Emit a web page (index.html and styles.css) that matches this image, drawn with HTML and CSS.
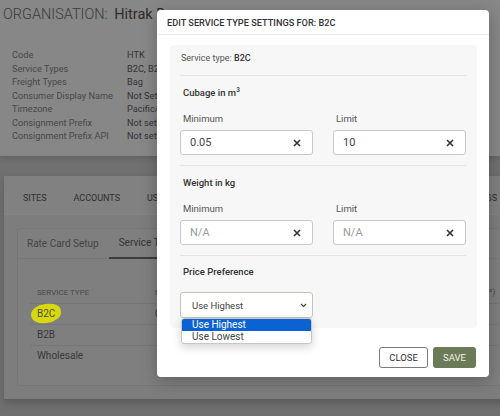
FILE: index.html
```html
<!DOCTYPE html>
<html lang="en">
<head>
    <meta charset="UTF-8">
    <meta name="viewport" content="width=device-width, initial-scale=1.0">
    <title>Organisation - Service Types</title>
    <link rel="stylesheet" href="styles.css">
</head>
<body>
    <div class="page">
        <header class="org-header">
            <h1 class="org-title"><span class="org-label">ORGANISATION:</span> Hitrak Demo</h1>
            <dl class="org-details">
                <div class="detail-row"><dt>Code</dt><dd>HTK</dd></div>
                <div class="detail-row"><dt>Service Types</dt><dd>B2C, B2B, Wholesale</dd></div>
                <div class="detail-row"><dt>Freight Types</dt><dd>Bag</dd></div>
                <div class="detail-row"><dt>Consumer Display Name</dt><dd>Not Set</dd></div>
                <div class="detail-row"><dt>Timezone</dt><dd>Pacific/Auckland</dd></div>
                <div class="detail-row"><dt>Consignment Prefix</dt><dd>Not set</dd></div>
                <div class="detail-row"><dt>Consignment Prefix API</dt><dd>Not set</dd></div>
            </dl>
        </header>

        <main class="content">
            <section class="card">
                <nav class="tabs">
                    <span class="tab">SITES</span>
                    <span class="tab">ACCOUNTS</span>
                    <span class="tab">USERS</span>
                    <span class="tab tab-last">SETTINGS</span>
                </nav>
                <div class="inner-card">
                    <nav class="subtabs">
                        <span class="subtab">Rate Card Setup</span>
                        <span class="subtab active">Service Types</span>
                    </nav>
                    <table class="service-table">
                        <thead>
                            <tr>
                                <th class="col-type">SERVICE TYPE</th>
                                <th class="col-min">MIN CUBAGE (m³)</th>
                                <th class="col-mid">MIN WEIGHT (kg)</th>
                                <th class="col-max">LIMIT (m³)</th>
                            </tr>
                        </thead>
                        <tbody>
                            <tr><td><span class="marker">B2C</span></td><td>0.05</td><td></td><td>10</td></tr>
                            <tr><td>B2B</td><td></td><td></td><td></td></tr>
                            <tr><td>Wholesale</td><td></td><td></td><td></td></tr>
                        </tbody>
                    </table>
                </div>
            </section>
        </main>
    </div>

    <div class="modal">
        <div class="modal-header">EDIT SERVICE TYPE SETTINGS FOR: B2C</div>
        <div class="modal-body">
            <div class="panel">
                <div class="service-type">Service type: <b>B2C</b></div>

                <div class="section">
                    <div class="section-title">Cubage in m<sup>3</sup></div>
                    <div class="field-row">
                        <div class="field">
                            <label>Minimum</label>
                            <div class="input-box"><span class="value">0.05</span><span class="clear"><svg width="8" height="8" viewBox="0 0 8 8"><path d="M1 1L7 7M7 1L1 7" /></svg></span></div>
                        </div>
                        <div class="field">
                            <label>Limit</label>
                            <div class="input-box"><span class="value">10</span><span class="clear"><svg width="8" height="8" viewBox="0 0 8 8"><path d="M1 1L7 7M7 1L1 7" /></svg></span></div>
                        </div>
                    </div>
                </div>

                <div class="section">
                    <div class="section-title">Weight in kg</div>
                    <div class="field-row">
                        <div class="field">
                            <label>Minimum</label>
                            <div class="input-box"><span class="value placeholder">N/A</span><span class="clear"><svg width="8" height="8" viewBox="0 0 8 8"><path d="M1 1L7 7M7 1L1 7" /></svg></span></div>
                        </div>
                        <div class="field">
                            <label>Limit</label>
                            <div class="input-box"><span class="value placeholder">N/A</span><span class="clear"><svg width="8" height="8" viewBox="0 0 8 8"><path d="M1 1L7 7M7 1L1 7" /></svg></span></div>
                        </div>
                    </div>
                </div>

                <div class="section last">
                    <div class="section-title">Price Preference</div>
                    <div class="select-wrap">
                        <div class="select-box">
                            <span>Use Highest</span>
                            <svg class="chevron" width="7" height="5" viewBox="0 0 7 5"><path d="M1 1L3.5 3.5L6 1" /></svg>
                        </div>
                        <ul class="dropdown">
                            <li class="selected">Use Highest</li>
                            <li>Use Lowest</li>
                        </ul>
                    </div>
                </div>
            </div>
        </div>
        <div class="modal-footer">
            <button class="btn btn-close">CLOSE</button>
            <button class="btn btn-save">SAVE</button>
        </div>
    </div>
</body>
</html>
```

FILE: styles.css
```css
body {
    margin: 0;
    width: 500px;
    height: 416px;
    overflow: hidden;
    position: relative;
    font-family: 'Roboto', 'Liberation Sans', sans-serif;
    background-color: #707070;
}

/* page behind the dialog (already dimmed) */

.org-header {
    background: #878787;
    padding: 5px 0 13px 3px;
    box-shadow: 0 2px 6px rgba(0, 0, 0, 0.15);
}

.org-title {
    margin: 0;
    font-size: 14.5px;
    line-height: 20px;
    font-weight: 400;
    color: #2d2d2d;
    white-space: nowrap;
}

.org-label {
    font-weight: 300;
    color: #3a3a3a;
    margin-right: 3px;
}

.org-details {
    margin: 23px 0 0 9px;
    font-size: 9.2px;
    line-height: 13.5px;
}

.detail-row {
    display: flex;
}

.detail-row dt {
    flex-shrink: 0;
    width: 115px;
    color: #474747;
    white-space: nowrap;
}

.detail-row dd {
    margin: 0;
    color: #333;
    white-space: nowrap;
}

.content {
    padding: 20px 0 0 4px;
}

.card {
    width: 520px;
    background: #7d7d7d;
    padding-bottom: 13px;
    box-shadow: 0 4px 8px rgba(0, 0, 0, 0.2);
}

.tabs {
    display: flex;
    align-items: center;
    height: 32px;
    padding: 6px 27px 0 19px;
    background: #818181;
    border-bottom: 1px solid #858585;
    font-size: 9px;
    color: #2f2f2f;
}

.tab {
    margin-right: 27px;
}

.tab-last {
    margin-left: auto;
    margin-right: 0;
}

.inner-card {
    margin: 13px 0 0 13px;
    border: 1px solid #767676;
    border-radius: 4px 0 0 4px;
    background: #7f7f7f;
    padding-bottom: 19px;
}

.subtabs {
    display: flex;
    height: 29px;
    border-bottom: 1px solid #777;
    font-size: 10px;
}

.subtab {
    display: flex;
    align-items: center;
    padding: 0 10px 0 9px;
    color: #444;
}

.subtab.active {
    color: #333;
    border-bottom: 2px solid #3c3c3c;
    margin-bottom: -1px;
    padding: 0 30px 0 10px;
}

.service-table {
    margin: 23px 0 0 12px;
    border-collapse: collapse;
    font-size: 10px;
    color: #393939;
}

.service-table th {
    font-size: 8px;
    font-weight: 400;
    color: #4a4a4a;
    text-align: left;
    height: 21px;
    padding: 0 7px;
    white-space: nowrap;
}

.service-table td {
    height: 20px;
    padding: 0 7px;
    border-top: 1px solid #767676;
}

.col-type { width: 104px; }
.col-min { width: 120px; }
.col-mid { width: 150px; }
.col-max { width: 60px; }

.service-table th.col-max {
    font-size: 9px;
}

.marker {
    position: relative;
    display: inline-block;
    z-index: 0;
    color: #505030;
}

.marker::before {
    content: '';
    position: absolute;
    left: -6px;
    right: -6px;
    top: -4px;
    bottom: -4px;
    background: #d8d80e;
    border-radius: 50% 40% 50% 45%;
    transform: rotate(-6deg);
    z-index: -1;
}

/* dialog */

.modal {
    position: absolute;
    left: 157px;
    top: 10px;
    width: 332px;
    height: 367px;
    background: #fff;
    border-radius: 4px;
    box-shadow: 0 4px 16px rgba(0, 0, 0, 0.25);
    display: flex;
    flex-direction: column;
}

.modal-header {
    height: 24px;
    line-height: 25px;
    padding-left: 10px;
    border-bottom: 1px solid #ececec;
    font-size: 9.2px;
    font-weight: 500;
    color: #333;
}

.modal-body {
    padding: 10px 12px 0 13px;
}

.panel {
    background: #f7f7f7;
    border-radius: 4px;
    padding: 0 11px 10px 10px;
}

.service-type {
    padding: 6px 1px 10px;
    line-height: 14px;
    font-size: 9px;
    color: #555;
    border-bottom: 1px solid #e4e4e4;
}

.service-type b {
    color: #333;
    font-weight: 500;
}

.section {
    padding: 10px 0 10px;
    border-bottom: 1px solid #e4e4e4;
}

.section.last {
    border-bottom: none;
    padding: 9px 0 0;
}

.section-title {
    padding-left: 3px;
    line-height: 14px;
    font-size: 9.5px;
    font-weight: 500;
    color: #333;
}

.section-title sup {
    font-size: 6.5px;
    line-height: 0;
}

.field-row {
    display: flex;
    gap: 20px;
    margin-top: 12px;
}

.field {
    width: 133px;
}

.field label {
    display: block;
    padding-left: 3px;
    line-height: 14px;
    font-size: 9.5px;
    color: #555;
}

.input-box {
    display: flex;
    align-items: center;
    justify-content: space-between;
    box-sizing: border-box;
    height: 25px;
    margin-top: 4px;
    padding: 0 11px 0 9px;
    background: #fff;
    border: 1px solid #c8c8cc;
    border-radius: 3px;
    font-size: 11px;
    color: #444;
}

.value.placeholder {
    color: #9a9a9a;
}

.clear svg {
    display: block;
}

.clear path {
    stroke: #333;
    stroke-width: 1.6;
    fill: none;
}

.select-wrap {
    position: relative;
    width: 133px;
    margin-top: 13px;
}

.select-box {
    display: flex;
    align-items: center;
    justify-content: space-between;
    box-sizing: border-box;
    height: 26px;
    padding: 0 5px 0 11px;
    background: #fff;
    border: 1px solid #c4c4bb;
    border-radius: 3px;
    font-size: 9.5px;
    color: #444;
}

.chevron path {
    stroke: #444;
    stroke-width: 1.2;
    fill: none;
}

.dropdown {
    position: absolute;
    left: 1px;
    top: 26px;
    width: 131px;
    margin: 0;
    padding: 0;
    list-style: none;
    box-sizing: border-box;
    background: #fff;
    border: 1px solid #c8c8c8;
    border-radius: 3px;
    box-shadow: 0 3px 10px rgba(0, 0, 0, 0.18);
    overflow: hidden;
    font-size: 10px;
    color: #444;
}

.dropdown li {
    height: 12px;
    line-height: 12px;
    padding-left: 10px;
}

.dropdown li.selected {
    background: #0b62d2;
    color: #fff;
}

.modal-footer {
    display: flex;
    justify-content: flex-end;
    gap: 5px;
    margin-top: 19px;
    padding-right: 13px;
}

.btn {
    height: 21px;
    padding: 0;
    border-radius: 3px;
    font-family: inherit;
    font-size: 9.5px;
    cursor: pointer;
}

.btn-close {
    width: 49px;
    background: #fff;
    border: 1px solid #7a7a7a;
    color: #333;
}

.btn-save {
    width: 43px;
    background: #6c7b57;
    border: none;
    color: #eef0ea;
}
```
